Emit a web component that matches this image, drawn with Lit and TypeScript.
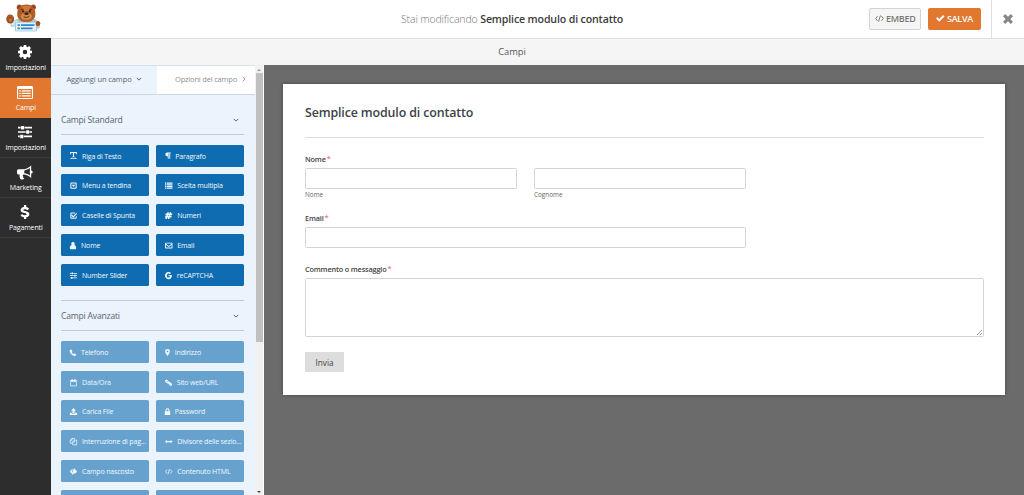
import { LitElement, html, svg, css, TemplateResult } from "lit";
import { customElement, property } from "lit/decorators.js";

const icons: Record<string, TemplateResult> = {
  gear: svg`<path fill-rule="evenodd" d="M6.6 0h2.800l.4 2.100 1.100.5L12.700 1.200l2.100 2.100-1.300 1.800.4 1.100 2.100.4v2.800l-2.100.4-.4 1.100 1.300 1.800-2.100 2.100-1.800-1.300-1.100.5-.4 2.100H6.600l-.4-2.100-1.100-.5-1.800 1.300-2.100-2.100 1.300-1.800-.4-1.100L0 9.400V6.600l2.100-.4.4-1.100L1.200 3.300l2.100-2.100 1.800 1.400 1.100-.5zM8 5.400a2.600 2.600 0 1 0 0 5.200 2.600 2.600 0 0 0 0-5.200z"/>`,
  form: svg`<path fill-rule="evenodd" d="M1.300 1.500H14.700A1.300 1.300 0 0 1 16 2.800V13.200A1.300 1.300 0 0 1 14.700 14.500H1.300A1.300 1.300 0 0 1 0 13.200V2.800A1.300 1.300 0 0 1 1.300 1.500zM1.100 4.600V13.400H14.900V4.600zM2.200 5.700h1.500v1.400H2.200zM4.700 5.700h9v1.400h-9zM2.200 8.200h1.500v1.400H2.200zM4.700 8.200h9v1.400h-9zM2.200 10.700h1.500v1.400H2.200zM4.700 10.700h9v1.400h-9z"/>`,
  sliders: svg`<path d="M0 2.100h3v1.800H0zM7.500 2.100H16v1.800H7.500zM3.500 1h3.500v4H3.500zM0 7.100h8.800v1.800H0zM13.200 7.100H16v1.800h-2.800zM9.300 6h3.500v4H9.300zM0 12.100h2v1.800H0zM6.500 12.100H16v1.800H6.500zM2.500 11H6v4H2.500z"/>`,
  horn: svg`<path fill-rule="evenodd" d="M14.200 1v4.900a1.500 1.500 0 0 1 0 3v4.500C11.700 11.300 9.300 10.100 6.500 9.900c-1 .4-1 1.500-.2 2.100-.5.900.2 1.500 1 2.100-.8 1.300-3 1.200-4 .4-.4-1.500-1-2.700-.6-4.600H1.500A1.500 1.500 0 0 1 0 8.400V6.200a1.500 1.500 0 0 1 1.500-1.500h4.600C9 4.700 11.700 3.300 14.200 1zM12.900 3.600C11 5 9.200 5.700 7.300 5.900v2.900c2 .2 3.800.9 5.600 2.200z"/>`,
  dollar: svg`<path d="M12.700 4.200 11 6C10 5.200 9 4.900 8 4.900c-1.300 0-2 .3-2 .9 0 2 7 .4 7 4.800 0 1.900-1.500 3.200-3.600 3.500V16H6.800v-1.900c-1.600-.2-2.900-.8-3.900-1.800l1.700-2.100c1.100 1 2.200 1.400 3.400 1.400s1.800-.3 1.800-1C9.800 8.500 3 10.100 3 5.800 3 4 4.600 2.600 6.800 2.300V0h2.600v2.300c1.300.2 2.400.8 3.300 1.900z"/>`,
  text: svg`<path d="M.5 0h15v4.800h-1.700L13 2.300H9.200v7.500l2 .6v1.500H4.800v-1.500l2-.6V2.300H3l-.8 2.500H.5zM3.500 12.500v1h9v-1.300l3 2-3 1.800v-1h-9V16l-3-1.800 3-2z"/>`,
  paragraph: svg`<path d="M6 1h9v2h-1.500v12h-2V3H10v12H8V9.500A4.250 4.250 0 0 1 6 1z"/>`,
  caret: svg`<path fill-rule="evenodd" d="M3 1h10a2 2 0 0 1 2 2v10a2 2 0 0 1-2 2H3a2 2 0 0 1-2-2V3a2 2 0 0 1 2-2zm.3 2.300v9.400h9.400V3.300zM4 6h8L8 11z"/>`,
  list: svg`<path d="M0 1.500h3v2.500H0zM4.300 1.500H16V4H4.300zM0 5.100h3v2.500H0zM4.300 5.100H16v2.500H4.300zM0 8.700h3v2.500H0zM4.300 8.700H16v2.500H4.300zM0 12.300h3v2.500H0zM4.300 12.300H16v2.500H4.300z"/>`,
  check: svg`<path d="M11.500 1H3a2 2 0 0 0-2 2v10a2 2 0 0 0 2 2h10a2 2 0 0 0 2-2V9l-2.200 1.800v2H3.200V3.200h8z"/><path d="m4.200 5.800 3.400 3.200L14.300 2 16 3.800 7.600 12.700 2.500 7.600z"/>`,
  hash: svg`<path fill-rule="evenodd" d="M5 1h3.300l-.8 2.700h1.800L10.100 1h3.300l-.8 2.700h3.100L14.900 7h-3.300l-.6 2h3.300l-.8 3.200H10L9.200 15H5.900l.8-2.800H4.900L4.100 15H.8l.8-2.800H0L.8 9h1.900l.6-2H.5l.8-3.300h2.900zM6.600 7 6 9h1.800l.6-2z"/>`,
  user: svg`<path d="M8 0a3.900 3.900 0 0 1 2.600 6.900C13.500 7.400 15 10 15 13.200 15 15 14 16 12.500 16h-9C2 16 1 15 1 13.200 1 10 2.500 7.400 5.400 6.900A3.900 3.900 0 0 1 8 0z"/>`,
  mail: svg`<path fill-rule="evenodd" d="M1.500 1.700h13A1.500 1.500 0 0 1 16 3.200v9.600a1.500 1.500 0 0 1-1.500 1.500h-13A1.500 1.500 0 0 1 0 12.800V3.200a1.500 1.500 0 0 1 1.500-1.500zm.4 2v.6L8 8.800l6.100-4.500v-.6zm0 3.200v5.400h12.200V6.900L8 11.200z"/>`,
  google: svg`<path d="M8.200 6.500h7.200c.7 4.800-2 9.500-7.200 9.500a8 8 0 1 1 5.400-13.900l-2.400 2.400A4.400 4.400 0 1 0 8.200 12.500c2 0 3.200-.9 3.600-2.800H8.200z"/>`,
  phone: svg`<path d="M1 2.500C2 1.300 3.500.8 4.400 1L6.700 5.200 5 7c.9 1.700 2.200 3 4 4l1.900-1.700 4.100 2.300c.2 1-.3 2.500-1.500 3.400C8 17.500-1.500 8 1 2.500z"/>`,
  pin: svg`<path fill-rule="evenodd" d="M8 0a5.500 5.500 0 0 1 5.500 5.500C13.500 7.500 12.500 8.500 8 16 3.500 8.500 2.500 7.500 2.500 5.500A5.500 5.500 0 0 1 8 0zm0 3.300a2.100 2.100 0 1 0 0 4.200 2.100 2.100 0 0 0 0-4.200z"/>`,
  calendar: svg`<path fill-rule="evenodd" d="M3.700 0h2.500v2h3.600V0h2.500v2H15v14H1V2h2.700zM2.500 6v8.500h11V6z"/>`,
  link: svg`<path fill="none" stroke="currentColor" stroke-width="2.500" d="m7.700 6.500-3-3.700a1.500 1.500 0 0 0-2.200 0l-.6.600a1.500 1.500 0 0 0 0 2.200l3.700 3a1.500 1.500 0 0 0 2.100-2.100zM9 9.800l3.200 3.700a1.500 1.500 0 0 0 2.200-2.200l-3.700-3.200A1.500 1.500 0 0 0 9 9.800zM6.200 7.200l4.500 2.500"/>`,
  upload: svg`<path d="M8 0l5.500 6h-3.300v5H5.800V6H2.500zM0 10.500h4.500v1.800h7v-1.800H16V15.500H0z"/>`,
  lock: svg`<path fill-rule="evenodd" d="M3.500 7V5a4.500 4.500 0 0 1 9 0v2H14v8.500H2V7zm2.400 0h4.200V5a2.100 2.100 0 0 0-4.200 0z"/>`,
  copy: svg`<path fill="none" stroke="currentColor" stroke-width="1.700" d="M6 11.500H.8V5L4.500 1H10v3M4.800 1v4H1M6.300 15.200V8.500L10 4.800h5.200v10.400H6.300M10.300 5v4h-4"/>`,
  arrows: svg`<path d="M0 8l4-4v2.700h8V4l4 4-4 4V9.300H4V12z"/>`,
  eye: svg`<path fill-rule="evenodd" d="M0 8c3.500-6.700 12.500-6.700 16 0-3.500 6.700-12.500 6.700-16 0zm8-3.600a3.500 3.500 0 0 0-2.500 6l1-1.200A2 2 0 0 1 8 6z"/><path d="m10.500.5 1.500.8L5.500 15.500 4 14.700z"/>`,
  code: svg`<path fill="none" stroke="currentColor" stroke-width="1.700" d="M4.500 3.800 1.200 8l3.300 4.200M11.500 3.800 14.800 8l-3.300 4.200M9.700 2.500 6.300 13.500"/>`,
  tick: svg`<path d="M0 8.700 2.800 5.800 6 9.200 13.200 2 16 4.800 6 14.700z"/>`,
  close: svg`<path d="M3.600 0 8 4.400 12.400 0 16 3.600 11.600 8 16 12.400 12.400 16 8 11.600 3.600 16 0 12.400 4.400 8 0 3.600z"/>`,
  down: svg`<path fill="none" stroke="currentColor" stroke-width="2.600" d="m2 5 6 6 6-6"/>`,
  right: svg`<path fill="none" stroke="currentColor" stroke-width="2.600" d="m5 2 6 6-6 6"/>`,
};

@customElement("wp-icon")
class WpIcon extends LitElement {
  @property() name = "";
  static styles = css`
    :host { display: block; width: 8px; height: 8px; flex: none; }
    svg { display: block; width: 100%; height: 100%; fill: currentColor; overflow: visible; }
  `;
  render() {
    return html`<svg viewBox="0 0 16 16" preserveAspectRatio="xMidYMid slice">${icons[this.name]}</svg>`;
  }
}

@customElement("bear-logo")
class BearLogo extends LitElement {
  static styles = css`
    :host { display: block; width: 36px; height: 29px; }
    svg { display: block; }
  `;
  render() {
    return html`<svg width="36" height="29" viewBox="0 0 36 29">
      <path fill="#a9cbdc" d="M4 18.500 11 15h18l4.500 3.500.5 5-2.500 1.500-1-.5V27H9.500l-.5-4.500-3.500.5z"/>
      <path fill="#d5e7f0" d="m4.500 19 6.500-3 2 4-6.500 2z"/>
      <ellipse cx="4.200" cy="15" rx="3.900" ry="4.600" fill="#9c4c20"/>
      <circle cx="4.300" cy="16" r="1.700" fill="#c07a40"/>
      <circle cx="2" cy="12.700" r=".7" fill="#c07a40"/><circle cx="4.400" cy="12" r=".7" fill="#c07a40"/><circle cx="6.500" cy="13.200" r=".7" fill="#c07a40"/>
      <circle cx="13.300" cy="3.200" r="2.600" fill="#a5511f"/><circle cx="27.300" cy="3.200" r="2.600" fill="#a5511f"/>
      <circle cx="13.400" cy="3.400" r="1.200" fill="#6d3519"/><circle cx="27.200" cy="3.400" r="1.200" fill="#6d3519"/>
      <path fill="#b35b25" d="M20.300.6c5.600 0 8.500 3.400 9 8 .7 5.800-2.800 9.600-9 9.600s-9.700-3.800-9-9.600c.5-4.600 3.400-8 9-8z"/>
      <path fill="#cb783a" d="M15.500 3q4.800-2.500 9.600 0l-2.300 4h-5z"/>
      <path fill="#d08a4c" d="M20.300 9c3.500 0 5.500 1.300 5.500 3.500s-2 3.500-5.500 3.500-5.500-1.300-5.500-3.500S16.800 9 20.300 9z"/>
      <ellipse cx="20.500" cy="9.700" rx="2.200" ry="1.300" fill="#382319"/>
      <circle cx="17" cy="7.300" r="1" fill="#2b1a12"/><circle cx="23.900" cy="7.300" r="1" fill="#2b1a12"/>
      <path d="M15 5.400l2.700-.2M23.200 5.200l2.700.2M17.700 12.800q2.900 1.700 5.500-.4" fill="none" stroke="#542b19" stroke-width=".9"/>
      <path fill="#e6f2f8" stroke="#86b8d2" stroke-width=".6" d="M9.500 18.200h21v8.800h-21z"/>
      <path fill="#2c89c5" d="M11.500 20.300h2.400v1.800h-2.400zM15 20.300h13.500v1.800H15zM11.500 23.500h2.400v1.700h-2.400zM15 23.500h11.500v1.700H15z"/>
      <ellipse cx="32" cy="19.500" rx="2.300" ry="2.600" fill="#a5511f"/>
    </svg>`;
  }
}

type Item = [string, string, number?];
const nav: Item[] = [
  ["gear", "Impostazioni"], ["form", "Campi"], ["sliders", "Impostazioni"],
  ["horn", "Marketing"], ["dollar", "Pagamenti"],
];
// Icon, label, icon width in pixels
const standard: Item[] = [
  ["text", "Riga di Testo", 7], ["paragraph", "Paragrafo", 5.5],
  ["caret", "Menu a tendina", 7], ["list", "Scelta multipla", 7.5],
  ["check", "Caselle di Spunta", 7], ["hash", "Numeri", 7.5],
  ["user", "Nome", 6], ["mail", "Email", 7.5],
  ["sliders", "Number Slider", 7], ["google", "reCAPTCHA", 7],
];
const advanced: Item[] = [
  ["phone", "Telefono", 6], ["pin", "Indirizzo", 5],
  ["calendar", "Data/Ora", 7], ["link", "Sito web/URL", 7],
  ["upload", "Carica File", 7], ["lock", "Password", 5],
  ["copy", "Interruzione di pag...", 7], ["arrows", "Divisore delle sezio...", 7.5],
  ["eye", "Campo nascosto", 7], ["code", "Contenuto HTML", 7.5],
  ["", ""], ["", ""],
];

@customElement("app-root")
class AppRoot extends LitElement {
  static styles = css`
    * { box-sizing: border-box; }
    :host {
      display: flex; flex-direction: column; height: 495px; overflow: hidden;
      font-family: "Open Sans", "Noto Sans", sans-serif; color: #444; background: #6b6b6b;
    }
    .header {
      height: 39px; flex: none; display: grid; grid-template-columns: 51px 1fr auto 33px;
      background: #fff; border-bottom: 1px solid #dfdfdf; align-items: center;
    }
    .logo { padding-left: 6px; margin-top: -1px; }
    .title { font-size: 10.600px; letter-spacing: -.17px; color: #777; white-space: nowrap; font-weight: 300; padding-left: 350px; }
    .title b { font-weight: 600; color: #3a3a3a; letter-spacing: -.14px; }
    .actions { display: flex; gap: 7px; padding-right: 10px; }
    .btn {
      height: 22px; border-radius: 2px; display: flex; align-items: center; justify-content: center;
      font-size: 9px; font-weight: 600; letter-spacing: -.28px; gap: 2.500px; margin-top: -1px;
    }
    .embed { width: 52px; background: #f5f5f5; border: 1px solid #d3d3d3; color: #777; }
    .embed wp-icon { width: 9px; height: 9px; }
    .save { width: 53px; background: #e27730; color: #fff; }
    .save wp-icon { width: 8.500px; height: 8.500px; }
    .close { align-self: stretch; border-left: 1px solid #ddd; display: flex; align-items: center; justify-content: center; color: #888; padding-right: 1px; padding-bottom: 1px; }
    .close wp-icon { width: 10px; height: 10px; }
    .main { flex: 1; display: flex; min-height: 0; }
    .nav { width: 51px; flex: none; background: #2d2d2d; margin-top: -1px; }
    .nav-item {
      height: 40px; display: flex; flex-direction: column; align-items: center; color: #fff;
      font-size: 7px; line-height: 10px; letter-spacing: -.13px; padding: 7px 1px 0 0; gap: 4px;
      border-bottom: 1px solid #393939; white-space: nowrap; font-weight: 500;
    }
    .nav-item span { padding-left: 1.500px; }
    .nav-item.active { background: #e27730; border-bottom-color: #e27730; }
    .nav-item wp-icon { width: 14px; height: 14px; }
    .nav-item wp-icon.wide { width: 16px; height: 15px; margin-bottom: -1px; }
    .body { flex: 1; display: flex; flex-direction: column; min-width: 0; }
    .bar {
      height: 26px; flex: none; background: #f5f5f5; font-size: 9.300px; color: #555;
      display: flex; align-items: center; justify-content: center; padding: 0 51px 1px 0; letter-spacing: -.05px;
    }
    .work { flex: 1; min-height: 0; display: flex; }
    .panel { width: 204px; flex: none; background: #ebf3fc; overflow: hidden; border-top: 1px solid #d9e1ea; }
    .tabs { display: flex; height: 29px; border-bottom: 1px solid #ced7e0; font-size: 7.500px; letter-spacing: -.1px; }
    .tab { width: 106px; display: flex; align-items: center; justify-content: center; gap: 4px; color: #5a6470; white-space: nowrap; padding-bottom: 2px; }
    .tab.off { width: 98px; background: #fff; color: #909090; padding-left: 10px; letter-spacing: -.19px; }
    .tab wp-icon { width: 6px; height: 6px; }
    .group { padding: 0 11px 0 10px; }
    .head {
      height: 30px; display: flex; align-items: center; justify-content: space-between; color: #5b646e;
      font-size: 8.600px; letter-spacing: -.2px; border-bottom: 1px solid #c3ccd6; padding-right: 5px;
    }
    .head wp-icon { width: 6px; height: 6px; }
    .group.first .head { height: 39.500px; padding-top: 11px; }
    .group.second { margin-top: 14.200px; }
    .group.second .head { border-top: 1px solid #c3ccd6; height: 31px; padding-top: 1px; }
    .fields { display: grid; grid-template-columns: 1fr 1fr; gap: 7.800px 6.500px; padding-top: 10px; }
    .field {
      height: 22px; background: #0f6cb0; color: #f2f8fc; border-radius: 1.500px; padding: 1px 0 0 9px;
      display: flex; align-items: center; gap: 5px; font-size: 7px; letter-spacing: -.16px; white-space: nowrap; font-weight: 500;
    }
    .field wp-icon { height: 7.200px; }
    .second .field { background: #67a2cf; }
    .scroll { width: 9px; flex: none; background: #f1f1f1; border-right: 1px solid #fff; display: flex; flex-direction: column; align-items: center; padding: 4px 0; }
    .up, .dn { border: 2px solid transparent; width: 0; height: 0; flex: none; }
    .up { border-bottom: 2.500px solid #999; border-top: 0; }
    .dn { border-top: 2.500px solid #444; border-bottom: 0; margin-top: auto; margin-bottom: -2px; }
    .thumb { width: 7px; height: 269px; background: #bfc1c1; margin-top: 2px; flex: none; }
    .canvas { flex: 1; padding: 19px 19px 0 19px; }
    .card { height: 311px; background: #fff; box-shadow: 0 0 4px rgba(0,0,0,.35); padding: 0 21px 0 22px; display: flex; flex-direction: column; align-items: flex-start; }
    .card h1 {
      align-self: stretch; margin: 0; height: 54px; border-bottom: 1px solid #ddd; font-size: 12.400px; line-height: 17px;
      padding-top: 20px; font-weight: 600; color: #3c434a; letter-spacing: -.12px;
    }
    .label { font-size: 7.300px; line-height: 10px; font-weight: 600; color: #444; letter-spacing: -.15px; }
    .label i { font-style: normal; color: #e25555; font-weight: 400; margin-left: 1px; }
    .row { display: grid; grid-template-columns: 212px 212px; gap: 17px; }
    .input { border: 1px solid #d3d3d3; border-radius: 1.500px; background: #fff; height: 21px; }
    .sub { font-size: 6.400px; line-height: 9px; color: #666; padding-top: 1px; }
    .l1 { margin-top: 16px; margin-bottom: 4px; }
    .l2 { margin-top: 14px; margin-bottom: 4px; }
    .l3 { margin-top: 16px; margin-bottom: 4px; }
    .email { width: 441px; }
    .area { align-self: stretch; height: 59px; display: flex; align-items: flex-end; justify-content: flex-end; color: #888; }
    .area svg { width: 5px; height: 5px; margin: 1px; }
    .send { margin-top: 15px; height: 20px; width: 39px; background: #ddd; color: #444; font-size: 8.200px; display: flex; align-items: center; justify-content: center; }
  `;

  private fields(items: Item[]) {
    return html`<div class="fields">${items.map(([icon, label, w]) => html`
      <div class="field">${icon ? html`<wp-icon name=${icon} style="width:${w}px"></wp-icon>` : ""}<span>${label}</span></div>`)}</div>`;
  }

  render() {
    return html`
      <div class="header">
        <div class="logo"><bear-logo></bear-logo></div>
        <div class="title">Stai modificando <b>Semplice modulo di contatto</b></div>
        <div class="actions">
          <div class="btn embed"><wp-icon name="code"></wp-icon>EMBED</div>
          <div class="btn save"><wp-icon name="tick"></wp-icon>SALVA</div>
        </div>
        <div class="close"><wp-icon name="close"></wp-icon></div>
      </div>
      <div class="main">
        <div class="nav">
          ${nav.map(([icon, label], i) => html`<div class="nav-item ${i === 1 ? "active" : ""}">
            <wp-icon class=${icon === "form" || icon === "horn" ? "wide" : ""} name=${icon}></wp-icon><span>${label}</span></div>`)}
        </div>
        <div class="body">
          <div class="bar">Campi</div>
          <div class="work">
            <div class="panel">
              <div class="tabs">
                <div class="tab"><span>Aggiungi un campo</span><wp-icon name="down"></wp-icon></div>
                <div class="tab off"><span>Opzioni del campo</span><wp-icon name="right"></wp-icon></div>
              </div>
              <div class="group first">
                <div class="head">Campi Standard<wp-icon name="down"></wp-icon></div>
                ${this.fields(standard)}
              </div>
              <div class="group second">
                <div class="head">Campi Avanzati<wp-icon name="down"></wp-icon></div>
                ${this.fields(advanced)}
              </div>
            </div>
            <div class="scroll"><div class="up"></div><div class="thumb"></div><div class="dn"></div></div>
            <div class="canvas">
              <div class="card">
                <h1>Semplice modulo di contatto</h1>
                <div class="label l1">Nome<i>*</i></div>
                <div class="row">
                  <div><div class="input"></div><div class="sub">Nome</div></div>
                  <div><div class="input"></div><div class="sub">Cognome</div></div>
                </div>
                <div class="label l2">Email<i>*</i></div>
                <div class="input email"></div>
                <div class="label l3">Commento o messaggio<i>*</i></div>
                <div class="input area"><svg viewBox="0 0 5 5"><path d="M0 5 5 0M3 5l2-2" stroke="currentColor" stroke-width=".8"/></svg></div>
                <div class="send">Invia</div>
              </div>
            </div>
          </div>
        </div>
      </div>`;
  }
}
